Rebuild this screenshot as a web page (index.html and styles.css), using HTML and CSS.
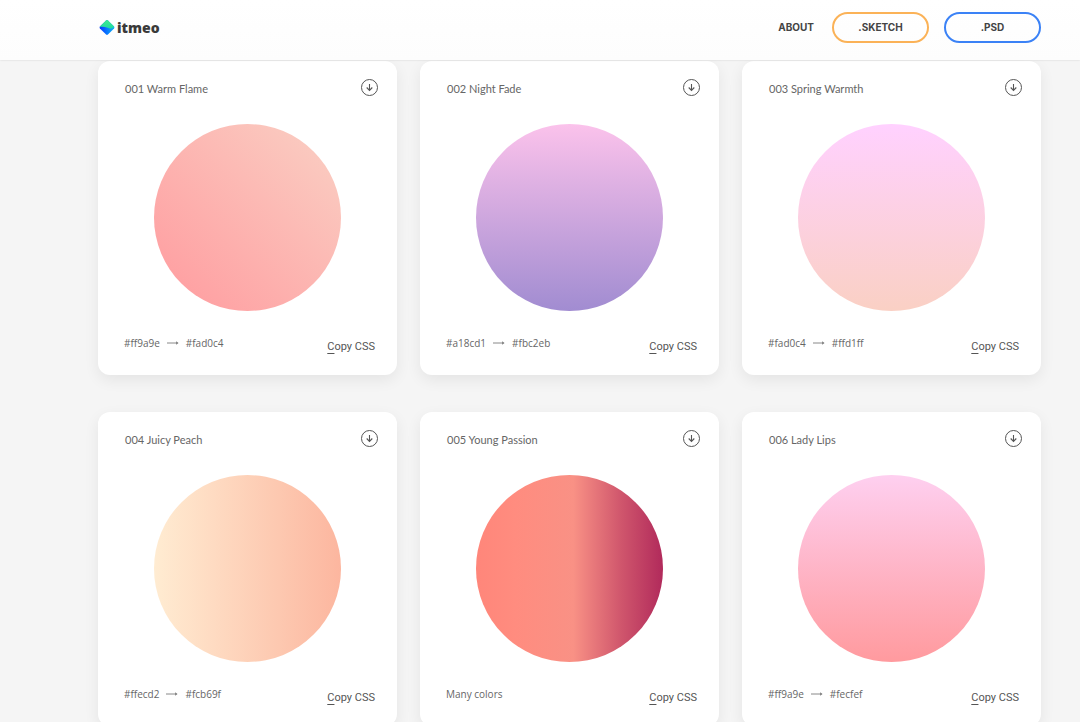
FILE: index.html
```html
<!DOCTYPE html>
<html lang="en">
<head>
<meta charset="utf-8">
<title>itmeo gradients</title>
<link rel="stylesheet" href="styles.css">
</head>
<body>
<svg class="sprite" aria-hidden="true">
  <symbol id="down" viewBox="0 0 18 18">
    <circle cx="9.5" cy="8.5" r="8" fill="none" stroke="#555" stroke-width="1"/>
    <path d="M9.5 5v6.3M6.7 8.5l2.8 2.9 2.8-2.9" fill="none" stroke="#555" stroke-width="1.1"/>
  </symbol>
  <symbol id="arrow" viewBox="0 0 12 6">
    <path d="M0 3h11" fill="none" stroke="#888" stroke-width="1"/>
    <path d="M9 1.2L11.6 3L9 4.8z" fill="#888"/>
  </symbol>
</svg>
<header class="topbar">
  <a class="logo" href="#">
    <svg class="logo-mark" viewBox="0 0 15 15" aria-hidden="true">
      <defs>
        <linearGradient id="green" x1="0" y1="0" x2="0" y2="1"><stop offset="0" stop-color="#3df08a"/><stop offset="1" stop-color="#22d6a4"/></linearGradient>
        <linearGradient id="blue" x1="0" y1="0" x2="1" y2="0"><stop offset="0" stop-color="#0a35ff"/><stop offset=".5" stop-color="#0878ff"/><stop offset="1" stop-color="#12b4f0"/></linearGradient>
      </defs>
      <path d="M6.6.4Q7.5-.3 8.4.4L14.6 6.6Q15.2 7.5 14.6 8.4L8.4 14.6Q7.5 15.2 6.6 14.6L.4 8.4Q-.2 7.5.4 6.6z" fill="url(#blue)"/>
      <path d="M6.6.4Q7.5-.3 8.4.4L14.6 6.6Q13 9 10.5 8.6C8 8 6 6.3.4 6.9L.4 6.6z" fill="url(#green)"/>
    </svg>
    <span>itmeo</span>
  </a>
  <nav class="nav">
    <a class="nav-link" href="#">ABOUT</a>
    <a class="pill pill-sketch" href="#">.SKETCH</a>
    <a class="pill pill-psd" href="#">.PSD</a>
  </nav>
</header>
<main class="grid">
  <article class="card">
    <div class="card-head"><h2>001 Warm Flame</h2><button class="download" aria-label="Download Warm Flame"><svg><use href="#down"/></svg></button></div>
    <div class="swatch warm-flame"></div>
    <div class="card-foot"><p class="colors">#ff9a9e <svg><use href="#arrow"/></svg> #fad0c4</p><button class="copy">Copy CSS</button></div>
  </article>
  <article class="card">
    <div class="card-head"><h2>002 Night Fade</h2><button class="download" aria-label="Download Night Fade"><svg><use href="#down"/></svg></button></div>
    <div class="swatch night-fade"></div>
    <div class="card-foot"><p class="colors">#a18cd1 <svg><use href="#arrow"/></svg> #fbc2eb</p><button class="copy">Copy CSS</button></div>
  </article>
  <article class="card">
    <div class="card-head"><h2>003 Spring Warmth</h2><button class="download" aria-label="Download Spring Warmth"><svg><use href="#down"/></svg></button></div>
    <div class="swatch spring-warmth"></div>
    <div class="card-foot"><p class="colors">#fad0c4 <svg><use href="#arrow"/></svg> #ffd1ff</p><button class="copy">Copy CSS</button></div>
  </article>
  <article class="card">
    <div class="card-head"><h2>004 Juicy Peach</h2><button class="download" aria-label="Download Juicy Peach"><svg><use href="#down"/></svg></button></div>
    <div class="swatch juicy-peach"></div>
    <div class="card-foot"><p class="colors">#ffecd2 <svg><use href="#arrow"/></svg> #fcb69f</p><button class="copy">Copy CSS</button></div>
  </article>
  <article class="card">
    <div class="card-head"><h2>005 Young Passion</h2><button class="download" aria-label="Download Young Passion"><svg><use href="#down"/></svg></button></div>
    <div class="swatch young-passion"></div>
    <div class="card-foot"><p class="colors">Many colors</p><button class="copy">Copy CSS</button></div>
  </article>
  <article class="card">
    <div class="card-head"><h2>006 Lady Lips</h2><button class="download" aria-label="Download Lady Lips"><svg><use href="#down"/></svg></button></div>
    <div class="swatch lady-lips"></div>
    <div class="card-foot"><p class="colors">#ff9a9e <svg><use href="#arrow"/></svg> #fecfef</p><button class="copy">Copy CSS</button></div>
  </article>
</main>
</body>
</html>
```
FILE: styles.css
```css
* { box-sizing: border-box; }
body {
  margin: 0;
  background: #f5f5f5;
  color: #555;
  font-family: Lato, sans-serif;
}
.sprite { display: none; }
a { text-decoration: none; color: inherit; }
button { border: 0; padding: 0; background: none; color: inherit; cursor: pointer; }

.topbar {
  position: sticky;
  top: 0;
  z-index: 2;
  display: flex;
  justify-content: space-between;
  height: 60px;
  padding: 12px 39px 0 99px;
  background: linear-gradient(#fff, #fdfdfd);
  box-shadow: 0 0 2px rgba(0, 0, 0, .15);
}
.logo {
  display: flex;
  align-items: center;
  gap: 2px;
  height: 31px;
  color: #3a3a3a;
  font: 800 14px/20px "Open Sans", sans-serif;
}
.logo-mark { width: 16px; height: 15px; }
.nav {
  display: flex;
  align-items: center;
  height: 31px;
  color: #444;
  font: 700 10px/12px Inter, sans-serif;
}
.nav-link { margin-right: 18px; padding-bottom: 2px; }
.pill {
  width: 97px;
  padding: 7px 0 8px;
  border: 2px solid;
  border-radius: 16px;
  text-align: center;
}
.pill + .pill { margin-left: 15px; }
.pill-sketch { border-color: #fbb257; }
.pill-psd { border-color: #3b82f6; }

.grid {
  display: grid;
  grid-template-columns: repeat(3, 1fr);
  gap: 37px 23px;
  padding: 1px 39px 37px 98px;
}
.card {
  padding: 18px 0;
  border-radius: 12px;
  background: #fff;
  box-shadow: 0 5px 15px rgba(0, 0, 0, .07);
}
.card-head, .card-foot { display: flex; justify-content: space-between; }
.card-head { height: 18px; padding: 0 19px 0 27px; }
.card-head h2 {
  margin: 0;
  color: #666;
  font: 400 11px/20px Lato, sans-serif;
}
.download svg { display: block; width: 18px; height: 18px; }
.swatch {
  width: 187px;
  height: 187px;
  margin: 27px auto 24px;
  border-radius: 50%;
}
.card-foot { height: 22px; padding: 0 22px 0 26px; }
.colors {
  display: flex;
  align-items: center;
  gap: 7px;
  height: 16px;
  margin: 0;
  color: #666;
  font: 400 10px/16px "Open Sans", sans-serif;
}
.colors svg { width: 12px; height: 6px; }
.copy {
  height: 24px;
  font: 400 11px/16px Roboto, sans-serif;
}
.copy::first-letter { text-decoration: underline; text-underline-offset: 3px; }

.warm-flame { background: linear-gradient(45deg, #ff9a9e, #fad0c4 99%); }
.night-fade { background: linear-gradient(to top, #a18cd1, #fbc2eb); }
.spring-warmth { background: linear-gradient(to top, #fad0c4, #ffd1ff); }
.juicy-peach { background: linear-gradient(to right, #ffecd2, #fcb69f); }
.young-passion { background: linear-gradient(to right, #ff8177, #ff867a 0%, #ff8c7f 21%, #f99185 52%, #cf556c 78%, #b12a5b); }
.lady-lips { background: linear-gradient(to top, #ff9a9e, #fecfef 99%, #fecfef); }
```
